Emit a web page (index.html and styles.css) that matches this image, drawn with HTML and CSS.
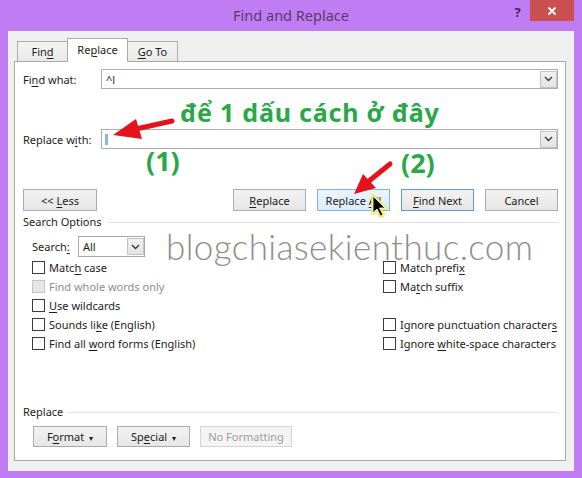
FILE: index.html
```html
<!DOCTYPE html>
<html>
<head>
<meta charset="utf-8">
<link rel="stylesheet" href="styles.css">
</head>
<body>
<div class="window">
  <div class="titlebar">
    <div class="title-spacer"></div>
    <div class="title">Find and Replace</div>
    <div class="controls">
      <div class="help">?</div>
      <div class="close"><svg width="10" height="10" viewBox="0 0 10 10"><path d="M1.5 1.5 L8.5 8.5 M8.5 1.5 L1.5 8.5" stroke="#fff" stroke-width="1.8"/></svg></div>
    </div>
  </div>
  <div class="client">
    <div class="tabs">
      <div class="tab tab-find">Fin<u>d</u></div>
      <div class="tab tab-replace active">Re<u>p</u>lace</div>
      <div class="tab tab-goto"><u>G</u>o To</div>
    </div>
    <div class="panel">
      <div class="row">
        <div class="label">Fi<u>n</u>d what:</div>
        <div class="combo"><span class="value">^l</span><span class="drop"><svg width="9" height="6" viewBox="0 0 9 6"><path d="M1 1 L4.5 4.5 L8 1" fill="none" stroke="#3a3a3a" stroke-width="1.4"/></svg></span></div>
      </div>
      <div class="row row-replace">
        <div class="label">Replace w<u>i</u>th:</div>
        <div class="combo"><span class="sel"></span><span class="drop"><svg width="9" height="6" viewBox="0 0 9 6"><path d="M1 1 L4.5 4.5 L8 1" fill="none" stroke="#3a3a3a" stroke-width="1.4"/></svg></span></div>
      </div>
      <div class="btnrow">
        <div class="btn btn-less"><span>&lt;&lt; <u>L</u>ess</span></div>
        <div class="btn-group">
          <div class="btn"><span><u>R</u>eplace</span></div>
          <div class="btn hover"><span>Replace <u>A</u>ll</span></div>
          <div class="btn default"><span><u>F</u>ind Next</span></div>
          <div class="btn"><span>Cancel</span></div>
        </div>
      </div>
      <div class="section"><span>Search Options</span></div>
      <div class="search-row">
        <div class="search-label">Search<u>:</u></div>
        <div class="select"><span class="value">All</span><span class="drop sel-drop"><svg width="9" height="6" viewBox="0 0 9 6"><path d="M1 1 L4.5 4.5 L8 1" fill="none" stroke="#3a3a3a" stroke-width="1.4"/></svg></span></div>
      </div>
      <div class="options">
        <div class="opt"><span class="box"></span><span>Matc<u>h</u> case</span></div>
        <div class="opt disabled"><span class="box"></span><span>Find whole words only</span></div>
        <div class="opt"><span class="box"></span><span><u>U</u>se wildcards</span></div>
        <div class="opt"><span class="box"></span><span>Sounds li<u>k</u>e (English)</span></div>
        <div class="opt"><span class="box"></span><span>Find all <u>w</u>ord forms (English)</span></div>
        <div class="opt"><span class="box"></span><span>Match prefi<u>x</u></span></div>
        <div class="opt"><span class="box"></span><span>Ma<u>t</u>ch suffix</span></div>
        <div class="opt empty"></div>
        <div class="opt"><span class="box"></span><span>Ignore punctuation character<u>s</u></span></div>
        <div class="opt"><span class="box"></span><span>Ignore <u>w</u>hite-space characters</span></div>
      </div>
      <div class="section section-replace"><span>Replace</span></div>
      <div class="btnrow2">
        <div class="btn btn-format"><span>F<u>o</u>rmat <span class="tri">&#9662;</span></span></div>
        <div class="btn"><span>Sp<u>e</u>cial <span class="tri">&#9662;</span></span></div>
        <div class="btn btn-disabled"><span>No Formatting</span></div>
      </div>
    </div>
  </div>
</div>

<div class="watermark">blogchiasekienthuc.com</div>
<div class="note note-text">để 1 dấu cách ở đây</div>
<div class="note note-1">(1)</div>
<div class="note note-2">(2)</div>
<svg class="overlay" width="582" height="478" viewBox="0 0 582 478">
  <line x1="172" y1="121" x2="136" y2="129" stroke="#e3121b" stroke-width="5" stroke-linecap="round"/>
  <polygon points="113,135 136,119 142,139" fill="#e3121b"/>
  <line x1="390" y1="164" x2="369" y2="181" stroke="#e3121b" stroke-width="5" stroke-linecap="round"/>
  <polygon points="354,194 363,174 376,188" fill="#e3121b"/>
  <g transform="translate(373,196)">
    <path d="M0 0 L0 17 L4 13 L7.5 20 L10 19 L6.5 12 L12 12 Z" fill="#f4f03a" stroke="#f1ed4a" stroke-width="4" stroke-linejoin="round" opacity="0.85"/>
    <path d="M0 0 L0 17 L4 13 L7.5 20 L10 19 L6.5 12 L12 12 Z" fill="#000" stroke="#fff" stroke-width="0.8"/>
  </g>
</svg>
</body>
</html>
```
FILE: styles.css
```css
* { box-sizing: border-box; }
html, body { margin: 0; padding: 0; }
body {
  width: 582px;
  height: 478px;
  background: #c07cf3;
  font-family: "Noto Sans", "Open Sans", sans-serif;
  font-size: 11px;
  color: #1b1b1b;
  position: relative;
  overflow: hidden;
}
u { text-decoration: underline; text-underline-offset: 2px; }

.titlebar { height: 31px; display: flex; align-items: flex-start; }
.title-spacer { width: 77px; }
.title { flex: 1; text-align: center; font-size: 14.5px; line-height: 31px; color: #5a3a6e; }
.controls { width: 77px; display: flex; }
.help { width: 25px; text-align: center; font-weight: bold; font-size: 13px; line-height: 24px; color: #45285a; }
.close { width: 44px; height: 21px; background: #c9504f; display: flex; align-items: center; justify-content: center; }

.client { margin: 0 8px; height: 440px; background: #f0f0f0; padding: 7px 8px 0 6px; }

.tabs { display: flex; align-items: flex-end; margin-left: 3px; height: 23px; position: relative; z-index: 1; }
.tab {
  height: 20px; border: 1px solid #acacac; border-bottom: none;
  background: linear-gradient(#f4f4f4, #e9e9e9);
  text-align: center; line-height: 20px; margin-right: -1px;
}
.tab-find { width: 51px; }
.tab-replace { width: 61px; }
.tab-goto { width: 51px; }
.tab.active { height: 24px; background: #fff; margin-bottom: -1px; line-height: 21px; position: relative; z-index: 2; }

.panel { height: 400px; border: 1px solid #a9a9a9; background: #fff; padding: 7px 7px 0 8px; }

.row { display: flex; align-items: center; height: 20px; }
.row-replace { margin-top: 40px; }
.label { width: 78px; }
.combo { flex: 1; height: 20px; border: 1px solid #abadb3; display: flex; align-items: center; padding-left: 3px; }
.combo .value { padding-left: 1px; }
.sel { width: 3px; height: 11px; background: #8cb5e3; }
.drop {
  margin-left: auto; width: 17px; height: 17px;
  background: linear-gradient(#f1f1f1, #e3e3e3); border: 1px solid #c3c3c3;
  display: flex; align-items: center; justify-content: center;
}

.btnrow { display: flex; margin-top: 40px; height: 22px; }
.btn {
  width: 73px; height: 22px; border: 1px solid #acacac;
  background: linear-gradient(#f2f2f2, #e6e6e6);
  display: flex; align-items: center; justify-content: center; white-space: nowrap;
}
.btn-less { width: 74px; }
.btn-group { margin-left: auto; display: flex; gap: 11px; }
.btn.hover { background: linear-gradient(#eaf4fc, #dcecfb); border-color: #7eb4ea; }
.btn.default { border-color: #5a9bd8; }

.section { display: flex; align-items: center; margin-top: 4px; height: 14px; line-height: 14px; }
.section::after { content: ""; flex: 1; height: 1px; background: #dde1e4; margin-left: 6px; }

.search-row { display: flex; align-items: center; margin-top: 7px; height: 21px; padding-left: 9px; }
.search-label { width: 46px; }
.select { width: 67px; height: 21px; border: 1px solid #a8a8a8; display: flex; align-items: center; padding-left: 4px; }

.options {
  display: grid; grid-template-columns: 351px 1fr; grid-template-rows: repeat(5, 19px);
  grid-auto-flow: column; margin-top: 1px; padding-left: 9px;
}
.opt { display: flex; align-items: center; white-space: nowrap; }
.box { width: 13px; height: 13px; border: 1px solid #3c3c3c; background: #fff; margin-right: 4px; flex: none; }
.opt.disabled { color: #8e8e8e; }
.opt.disabled .box { background: #e6e6e6; border-color: #c4c4c4; }

.section-replace { margin-top: 52px; }

.btnrow2 { display: flex; gap: 10px; margin-top: 7px; padding-left: 10px; }
.btnrow2 .btn { height: 21px; }
.btn-format { width: 74px; }
.tri { font-size: 8px; margin-left: 2px; }
.btn.btn-disabled { width: 92px; color: #9d9d9d; background: #f4f4f4; border-color: #d4d4d4; }

.watermark {
  position: absolute; left: 166px; top: 226px;
  font-family: "Lato", "Noto Sans", sans-serif; font-weight: 300;
  font-size: 35px; line-height: 40px; color: #8d8d8d; letter-spacing: 0.4px;
}
.note {
  position: absolute; font-family: "Noto Sans", sans-serif; font-weight: bold;
  color: #2aa748; line-height: 30px;
}
.note-text { left: 180px; top: 97px; font-size: 25px; letter-spacing: 0.8px; }
.note-1 { left: 146px; top: 146px; font-size: 27px; }
.note-2 { left: 401px; top: 148px; font-size: 27px; }
.overlay { position: absolute; left: 0; top: 0; }
```
